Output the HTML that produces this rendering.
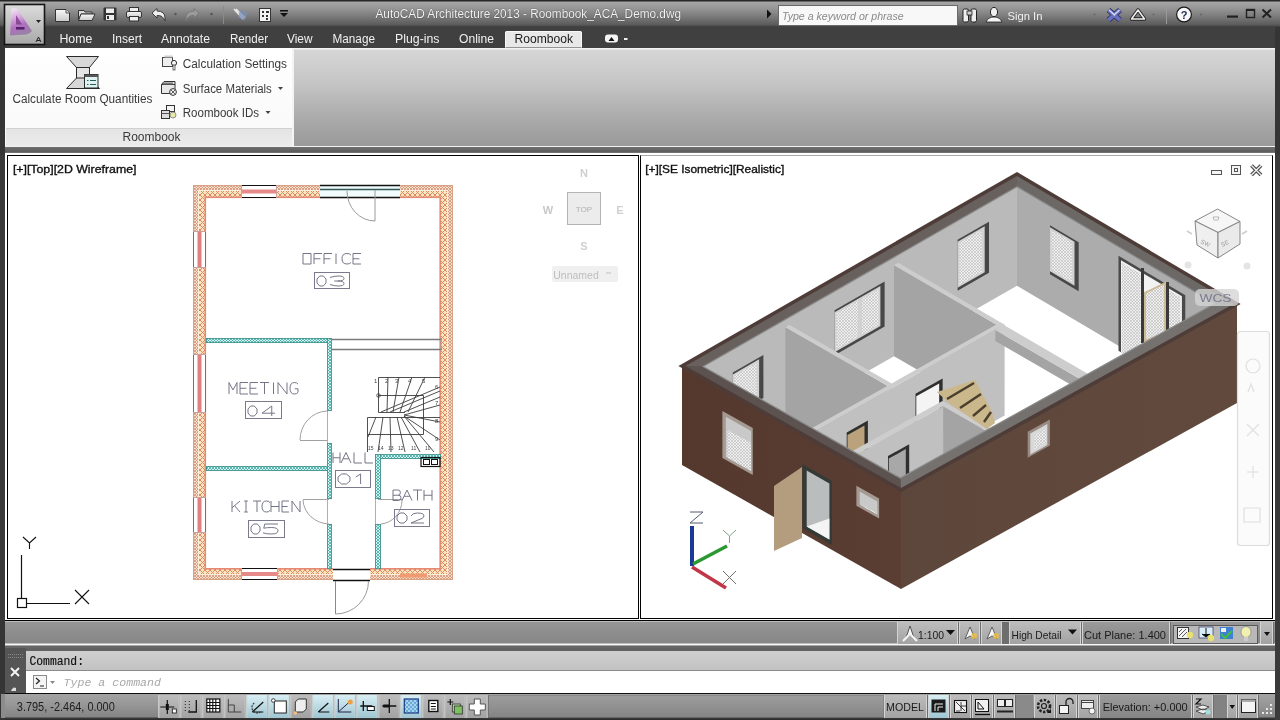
<!DOCTYPE html>
<html><head><meta charset="utf-8">
<style>
*{margin:0;padding:0;box-sizing:border-box}
html,body{width:1280px;height:720px;overflow:hidden;background:#3a3a3a;font-family:"Liberation Sans",sans-serif}
.a{position:absolute;will-change:transform}
.t{position:absolute;white-space:nowrap;line-height:1}
#title{left:0;top:0;width:1280px;height:27px;background:linear-gradient(#262626 0,#262626 1px,#a6a6a6 2px,#979797 8px,#7c7c7c 16px,#5e5e5e 24px,#4e4e4e 26px,#363636 27px)}
#tabs{left:0;top:27px;width:1280px;height:21px;background:#404040}
#ribbon{left:5px;top:48px;width:1270px;height:98px;background:linear-gradient(#f4f4f4 0,#f4f4f4 1px,#d6d6d6 2px,#c6c6c6 35%,#a8a8a8 75%,#9a9a9a)}
#panel{left:5px;top:48px;width:289px;height:98px;background:linear-gradient(#ffffff,#f8f8f8);border-right:2px solid #f4f4f4}
#panlab{left:6px;top:128px;width:286px;height:18px;background:linear-gradient(#e4e4e4,#ececec);border-top:1px solid #d0d0d0}
#band{left:0;top:146px;width:1280px;height:9px;background:linear-gradient(#f2f2f2 0,#f2f2f2 1px,#707070 1px,#5c5c5c 6px,#8a8a8a 7px,#d8d8d8 9px)}
#vparea{left:5px;top:153px;width:1270px;height:468px;background:#fff}
#vpl{left:7px;top:155px;width:632px;height:464px;border:1px solid #000;background:#fff}
#vpr{left:640px;top:155px;width:633px;height:464px;border:1px solid #000;border-top-color:#a8a8a8;background:#fff}
#dsb{left:0;top:620px;width:1280px;height:28px;background:linear-gradient(#000 0,#000 1px,#e8e8e8 1px,#969696 2px,#8e8e8e 12px,#868686 23px,#f6f6f6 24px,#f6f6f6 25px,#5e5e5e 26px,#6c6c6c 28px)}
#cmd{left:5px;top:648px;width:1270px;height:45px;background:linear-gradient(#626262 0,#626262 3px,#fff 3px)}
#cmdh{left:26px;top:651px;width:1249px;height:20px;background:linear-gradient(#d0d0d0,#c2c2c2);border-bottom:1px solid #8c8c8c}
#cmdgrip{left:5px;top:648px;width:21px;height:45px;background:linear-gradient(#666,#4a4a4a)}
#sb{left:0;top:693px;width:1280px;height:27px;background:linear-gradient(#0e0e0e 0,#0e0e0e 1px,#a4a4a4 1px,#969696 12px,#858585 24px,#3a3a3a 25px,#2a2a2a 27px)}
.tab{color:#f2f2f2;font-size:12px;top:33px;text-shadow:0 0 1px #000}
.rb{color:#333;font-size:12px}
.btn{position:absolute;top:695px;height:22px;background:linear-gradient(#b6b6b6,#9c9c9c);border-right:1px solid #6a6a6a;border-left:1px solid #c8c8c8}
.btnb{background:linear-gradient(#d0e8f0,#9cc4d4)}
.dbtn{position:absolute;top:622px;height:22px;background:linear-gradient(#b8b8b8,#a0a0a0);border-right:1px solid #707070;border-left:1px solid #cfcfcf}
</style></head><body>
<div class="a" id="title"></div>
<div class="a" id="tabs"></div>
<div class="a" id="ribbon"></div>
<div class="a" id="panel"></div>
<div class="a" id="panlab"></div>
<div class="a" id="band"></div>
<div class="a" id="vparea"></div>
<div class="a" id="vpl"></div>
<div class="a" id="vpr"></div>
<svg class="a" style="left:8px;top:156px" width="630" height="462" viewBox="8 156 630 462"><defs><pattern id="hx" width="5" height="5" patternUnits="userSpaceOnUse"><rect width="5" height="5" fill="#f9e6c0"/><path d="M0,0L5,5M5,0L0,5" stroke="#e08a62" stroke-width="1"/></pattern><pattern id="hf" width="3" height="3" patternUnits="userSpaceOnUse"><rect width="3" height="3" fill="#f4e0cc"/><path d="M0,0L3,3M3,0L0,3" stroke="#d69274" stroke-width="0.8"/></pattern><pattern id="ht" width="3" height="3" patternUnits="userSpaceOnUse"><rect width="3" height="3" fill="#d4f4f2"/><path d="M0,0L3,3M3,0L0,3" stroke="#3fa9a2" stroke-width="0.8"/></pattern></defs>
<rect x="193" y="185" width="260" height="13" fill="url(#hx)"/>
<rect x="193" y="568" width="260" height="12" fill="url(#hx)"/>
<rect x="193" y="185" width="13" height="395" fill="url(#hx)"/>
<rect x="440" y="185" width="13" height="395" fill="url(#hx)"/>
<rect x="193" y="185" width="260" height="5" fill="url(#hf)"/>
<rect x="193" y="575" width="260" height="5" fill="url(#hf)"/>
<rect x="193" y="185" width="5" height="395" fill="url(#hf)"/>
<rect x="448" y="185" width="5" height="395" fill="url(#hf)"/>
<rect x="198.5" y="190.5" width="249" height="384" fill="none" stroke="#fbeede" stroke-width="1"/>
<rect x="204.5" y="196.5" width="236" height="1.6" fill="#e48a74"/>
<rect x="204.5" y="196.5" width="1.6" height="373" fill="#e48a74"/>
<rect x="439.4" y="196.5" width="1.6" height="373" fill="#e48a74"/>
<rect x="204.5" y="568" width="236" height="1.6" fill="#e48a74"/>
<rect x="193.5" y="185.5" width="259" height="394" fill="none" stroke="#d9a184" stroke-width="1"/>
<rect x="241" y="185" width="36" height="13" fill="#fff"/>
<line x1="241" y1="185.5" x2="277" y2="185.5" stroke="#111" stroke-width="1.2"/>
<line x1="241" y1="197.5" x2="277" y2="197.5" stroke="#111" stroke-width="1.2"/>
<rect x="241" y="189.5" width="36" height="4" fill="#e58a88"/>
<line x1="241.5" y1="185" x2="241.5" y2="198" stroke="#c8a0a0" stroke-width="1"/>
<line x1="276.5" y1="185" x2="276.5" y2="198" stroke="#c8a0a0" stroke-width="1"/>
<rect x="241" y="568" width="37" height="12" fill="#fff"/>
<line x1="241" y1="568.5" x2="278" y2="568.5" stroke="#111" stroke-width="1.2"/>
<line x1="241" y1="579.5" x2="278" y2="579.5" stroke="#111" stroke-width="1.2"/>
<rect x="241" y="572" width="37" height="4" fill="#e58a88"/>
<line x1="241.5" y1="568" x2="241.5" y2="580" stroke="#c8a0a0" stroke-width="1"/>
<line x1="277.5" y1="568" x2="277.5" y2="580" stroke="#c8a0a0" stroke-width="1"/>
<rect x="193" y="231" width="13" height="37" fill="#fff"/>
<line x1="193.5" y1="231" x2="193.5" y2="268" stroke="#5a7a90" stroke-width="1"/>
<line x1="205.5" y1="231" x2="205.5" y2="268" stroke="#5a7a90" stroke-width="1"/>
<rect x="197.5" y="231" width="4" height="37" fill="#e08080"/>
<line x1="193" y1="231.5" x2="206" y2="231.5" stroke="#c8a0a0" stroke-width="1"/>
<line x1="193" y1="267.5" x2="206" y2="267.5" stroke="#c8a0a0" stroke-width="1"/>
<rect x="193" y="354" width="13" height="59" fill="#fff"/>
<line x1="193.5" y1="354" x2="193.5" y2="413" stroke="#5a7a90" stroke-width="1"/>
<line x1="205.5" y1="354" x2="205.5" y2="413" stroke="#5a7a90" stroke-width="1"/>
<rect x="197.5" y="354" width="4" height="59" fill="#e08080"/>
<line x1="193" y1="354.5" x2="206" y2="354.5" stroke="#c8a0a0" stroke-width="1"/>
<line x1="193" y1="412.5" x2="206" y2="412.5" stroke="#c8a0a0" stroke-width="1"/>
<rect x="193" y="497" width="13" height="36" fill="#fff"/>
<line x1="193.5" y1="497" x2="193.5" y2="533" stroke="#5a7a90" stroke-width="1"/>
<line x1="205.5" y1="497" x2="205.5" y2="533" stroke="#5a7a90" stroke-width="1"/>
<rect x="197.5" y="497" width="4" height="36" fill="#e08080"/>
<line x1="193" y1="497.5" x2="206" y2="497.5" stroke="#c8a0a0" stroke-width="1"/>
<line x1="193" y1="532.5" x2="206" y2="532.5" stroke="#c8a0a0" stroke-width="1"/>
<rect x="320" y="185" width="80" height="13" fill="#f2fbfb"/>
<line x1="320" y1="185.5" x2="400" y2="185.5" stroke="#111" stroke-width="1.3"/>
<line x1="320" y1="197.5" x2="400" y2="197.5" stroke="#111" stroke-width="1.3"/>
<line x1="320" y1="189.5" x2="400" y2="189.5" stroke="#2e5a58" stroke-width="1.6"/>
<line x1="375" y1="190" x2="375" y2="221" stroke="#9a9a9a" stroke-width="1"/>
<path d="M347,191 A28,30 0 0 0 375,221" fill="none" stroke="#9a9a9a" stroke-width="1"/>
<rect x="333" y="568" width="37" height="13" fill="#fff"/>
<line x1="333" y1="569.5" x2="370" y2="569.5" stroke="#111" stroke-width="1.4"/>
<line x1="333" y1="580.5" x2="370" y2="580.5" stroke="#111" stroke-width="1.4"/>
<line x1="335.5" y1="581" x2="335.5" y2="614" stroke="#8a8a8a" stroke-width="1"/>
<path d="M335.5,614 A33,33 0 0 0 368.5,581" fill="none" stroke="#9a9a9a" stroke-width="1"/>
<rect x="400" y="573.5" width="27" height="4" fill="#ef9a70"/>
<rect x="206" y="338" width="126" height="5" fill="url(#ht)"/>
<rect x="206.4" y="338.4" width="125.2" height="4.2" fill="none" stroke="#3f8f8a" stroke-width="0.8"/>
<rect x="206" y="466" width="124" height="5" fill="url(#ht)"/>
<rect x="206.4" y="466.4" width="123.2" height="4.2" fill="none" stroke="#3f8f8a" stroke-width="0.8"/>
<rect x="327" y="338" width="5" height="73" fill="url(#ht)"/>
<rect x="327.4" y="338.4" width="4.2" height="72.2" fill="none" stroke="#3f8f8a" stroke-width="0.8"/>
<rect x="327" y="443" width="5" height="56" fill="url(#ht)"/>
<rect x="327.4" y="443.4" width="4.2" height="55.2" fill="none" stroke="#3f8f8a" stroke-width="0.8"/>
<rect x="327" y="524" width="5" height="45" fill="url(#ht)"/>
<rect x="327.4" y="524.4" width="4.2" height="44.2" fill="none" stroke="#3f8f8a" stroke-width="0.8"/>
<rect x="375" y="454" width="66" height="5" fill="url(#ht)"/>
<rect x="375.4" y="454.4" width="65.2" height="4.2" fill="none" stroke="#3f8f8a" stroke-width="0.8"/>
<rect x="375" y="454" width="6" height="45" fill="url(#ht)"/>
<rect x="375.4" y="454.4" width="5.2" height="44.2" fill="none" stroke="#3f8f8a" stroke-width="0.8"/>
<rect x="375" y="524" width="6" height="45" fill="url(#ht)"/>
<rect x="375.4" y="524.4" width="5.2" height="44.2" fill="none" stroke="#3f8f8a" stroke-width="0.8"/>
<line x1="332" y1="339.5" x2="442" y2="339.5" stroke="#7a7a7a" stroke-width="1.6"/>
<line x1="332" y1="349.5" x2="442" y2="349.5" stroke="#7a7a7a" stroke-width="1.6"/>
<line x1="441" y1="339" x2="441" y2="350" stroke="#9a9a9a" stroke-width="1"/>
<line x1="300" y1="440.5" x2="328" y2="440.5" stroke="#a0a0a0" stroke-width="1"/>
<path d="M300,440 A28,29 0 0 1 327,411" fill="none" stroke="#a0a0a0" stroke-width="1"/>
<line x1="303" y1="499.5" x2="329" y2="499.5" stroke="#a0a0a0" stroke-width="1"/>
<path d="M303,500 A27,25 0 0 0 329,524" fill="none" stroke="#a0a0a0" stroke-width="1"/>
<line x1="378" y1="499.5" x2="402" y2="499.5" stroke="#a0a0a0" stroke-width="1"/>
<path d="M402,500 A23,24 0 0 1 381,524" fill="none" stroke="#a0a0a0" stroke-width="1"/>
<line x1="327.5" y1="411" x2="327.5" y2="443" stroke="#b0b0b0" stroke-width="1"/>
<line x1="327.5" y1="499" x2="327.5" y2="524" stroke="#b0b0b0" stroke-width="1"/>
<line x1="375.5" y1="499" x2="375.5" y2="524" stroke="#b0b0b0" stroke-width="1"/>
<path d="M440,377.5 L378.5,377.5 L378.5,412.5 L405,412.5 M440,417.5 L367.5,417.5 L367.5,452 M378.5,395.5 L423.5,395.5 L423.5,434.5 L367.5,434.5" fill="none" stroke="#3c3c3c" stroke-width="0.9"/>
<path d="M388,377 L387,412 M399,377 L393,412 M412,377 L400,412 M425,377 L408,412 M381,412 L440,387 M390,412 L440,391 M404,412 L440,397 M404,415 L440,405 M404,415 L440,422 M404,416 L440,440 M376,417 L368,437 M383,417 L378,452 M390,417 L391,452 M397,417 L405,452 M401,417 L420,452 M404,416 L434,452" fill="none" stroke="#3c3c3c" stroke-width="0.9"/>
<circle cx="378.5" cy="395.5" r="1.8" fill="none" stroke="#3c3c3c" stroke-width="0.8"/>
<text x="374" y="383" font-size="6" fill="#444" font-family="Liberation Sans">1</text>
<text x="385" y="383" font-size="6" fill="#444" font-family="Liberation Sans">2</text>
<text x="395" y="383" font-size="6" fill="#444" font-family="Liberation Sans">3</text>
<text x="408" y="383" font-size="6" fill="#444" font-family="Liberation Sans">4</text>
<text x="422" y="383" font-size="6" fill="#444" font-family="Liberation Sans">5</text>
<text x="435" y="389" font-size="6" fill="#444" font-family="Liberation Sans">6</text>
<text x="435" y="405" font-size="6" fill="#444" font-family="Liberation Sans">7</text>
<text x="435" y="423" font-size="6" fill="#444" font-family="Liberation Sans">8</text>
<text x="435" y="441" font-size="6" fill="#444" font-family="Liberation Sans">9</text>
<text x="368" y="450" font-size="5" fill="#444" font-family="Liberation Sans">15</text>
<text x="378" y="450" font-size="5" fill="#444" font-family="Liberation Sans">14</text>
<text x="388" y="450" font-size="5" fill="#444" font-family="Liberation Sans">13</text>
<text x="398" y="450" font-size="5" fill="#444" font-family="Liberation Sans">12</text>
<text x="411" y="450" font-size="5" fill="#444" font-family="Liberation Sans">11</text>
<text x="425" y="450" font-size="5" fill="#444" font-family="Liberation Sans">10</text>
<rect x="421" y="457.5" width="19" height="9" fill="none" stroke="#111" stroke-width="1.2"/>
<rect x="423.5" y="459.5" width="6" height="5" fill="none" stroke="#111" stroke-width="1"/>
<rect x="431.5" y="459.5" width="6" height="5" fill="none" stroke="#111" stroke-width="1"/>
<path d="M303.00,253.50 L311.00,253.50 L311.00,264.00 L303.00,264.00 Z" fill="none" stroke="#6e6e82" stroke-width="0.95" stroke-linejoin="round"/><path d="M322.00,253.50 L314.00,253.50 L314.00,264.00 M314.00,258.75 L320.40,258.75" fill="none" stroke="#6e6e82" stroke-width="0.95" stroke-linejoin="round"/><path d="M332.00,253.50 L324.00,253.50 L324.00,264.00 M324.00,258.75 L330.40,258.75" fill="none" stroke="#6e6e82" stroke-width="0.95" stroke-linejoin="round"/><path d="M336.00,253.50 L336.00,264.00" fill="none" stroke="#6e6e82" stroke-width="0.95" stroke-linejoin="round"/><path d="M351.00,255.07 Q350.10,253.50 346.95,253.50 Q342.00,253.50 342.00,258.75 Q342.00,264.00 346.95,264.00 Q350.10,264.00 351.00,262.43" fill="none" stroke="#6e6e82" stroke-width="0.95" stroke-linejoin="round"/><path d="M361.00,253.50 L353.00,253.50 L353.00,264.00 L361.00,264.00 M353.00,258.75 L359.40,258.75" fill="none" stroke="#6e6e82" stroke-width="0.95" stroke-linejoin="round"/>
<rect x="314.5" y="272.5" width="35" height="16" fill="none" stroke="#7a7a8c" stroke-width="1"/>
<path d="M319.70,276.00 L323.30,276.00 L326.00,279.00 L326.00,283.00 L323.30,286.00 L319.70,286.00 L317.00,283.00 L317.00,279.00 Z" fill="none" stroke="#6e6e82" stroke-width="0.95" stroke-linejoin="round"/><path d="M330.00,277.50 Q334.20,276.00 338.40,276.00 Q344.00,276.00 344.00,278.50 Q344.00,281.00 337.70,281.00 Q344.00,281.00 344.00,283.50 Q344.00,286.00 338.40,286.00 Q334.20,286.00 330.00,284.50 M334.20,281.00 L337.70,281.00" fill="none" stroke="#6e6e82" stroke-width="0.95" stroke-linejoin="round"/>
<path d="M229.00,394.00 L229.00,382.50 L233.00,389.98 L237.00,382.50 L237.00,394.00" fill="none" stroke="#6e6e82" stroke-width="0.95" stroke-linejoin="round"/><path d="M248.00,382.50 L240.00,382.50 L240.00,394.00 L248.00,394.00 M240.00,388.25 L246.40,388.25" fill="none" stroke="#6e6e82" stroke-width="0.95" stroke-linejoin="round"/><path d="M258.00,382.50 L250.00,382.50 L250.00,394.00 L258.00,394.00 M250.00,388.25 L256.40,388.25" fill="none" stroke="#6e6e82" stroke-width="0.95" stroke-linejoin="round"/><path d="M260.00,382.50 L269.00,382.50 M264.50,382.50 L264.50,394.00" fill="none" stroke="#6e6e82" stroke-width="0.95" stroke-linejoin="round"/><path d="M273.50,382.50 L273.50,394.00" fill="none" stroke="#6e6e82" stroke-width="0.95" stroke-linejoin="round"/><path d="M278.00,394.00 L278.00,382.50 L287.00,394.00 L287.00,382.50" fill="none" stroke="#6e6e82" stroke-width="0.95" stroke-linejoin="round"/><path d="M298.00,384.23 Q297.20,382.50 294.40,382.50 Q290.00,382.50 290.00,388.25 Q290.00,394.00 294.40,394.00 Q297.20,394.00 298.00,392.27 L298.00,388.82 L294.80,388.82" fill="none" stroke="#6e6e82" stroke-width="0.95" stroke-linejoin="round"/>
<rect x="245.5" y="401.5" width="36" height="17" fill="none" stroke="#7a7a8c" stroke-width="1"/>
<path d="M250.70,406.00 L254.30,406.00 L257.00,409.00 L257.00,413.00 L254.30,416.00 L250.70,416.00 L248.00,413.00 L248.00,409.00 Z" fill="none" stroke="#6e6e82" stroke-width="0.95" stroke-linejoin="round"/><path d="M271.75,416.00 L271.75,406.00 L262.00,413.20 L275.00,413.20" fill="none" stroke="#6e6e82" stroke-width="0.95" stroke-linejoin="round"/>
<path d="M333.00,452.50 L333.00,463.00 M340.00,452.50 L340.00,463.00 M333.00,457.75 L340.00,457.75" fill="none" stroke="#6e6e82" stroke-width="0.95" stroke-linejoin="round"/><path d="M341.00,463.00 L346.00,452.50 L351.00,463.00 M343.20,458.80 L348.80,458.80" fill="none" stroke="#6e6e82" stroke-width="0.95" stroke-linejoin="round"/><path d="M354.00,452.50 L354.00,463.00 L362.00,463.00" fill="none" stroke="#6e6e82" stroke-width="0.95" stroke-linejoin="round"/><path d="M365.00,452.50 L365.00,463.00 L373.00,463.00" fill="none" stroke="#6e6e82" stroke-width="0.95" stroke-linejoin="round"/>
<rect x="335.5" y="470.5" width="35" height="17" fill="none" stroke="#7a7a8c" stroke-width="1"/>
<path d="M341.60,474.00 L346.40,474.00 L350.00,477.00 L350.00,481.00 L346.40,484.00 L341.60,484.00 L338.00,481.00 L338.00,477.00 Z" fill="none" stroke="#6e6e82" stroke-width="0.95" stroke-linejoin="round"/><path d="M355.80,477.00 L360.60,474.00 L360.60,484.00" fill="none" stroke="#6e6e82" stroke-width="0.95" stroke-linejoin="round"/>
<path d="M232.00,501.00 L232.00,512.00 M240.00,501.00 L232.00,507.82 M234.56,505.62 L240.00,512.00" fill="none" stroke="#6e6e82" stroke-width="0.95" stroke-linejoin="round"/><path d="M246.00,501.00 L246.00,512.00 M244.20,501.00 L247.80,501.00 M244.20,512.00 L247.80,512.00" fill="none" stroke="#6e6e82" stroke-width="0.95" stroke-linejoin="round"/><path d="M253.00,501.00 L261.00,501.00 M257.00,501.00 L257.00,512.00" fill="none" stroke="#6e6e82" stroke-width="0.95" stroke-linejoin="round"/><path d="M270.00,502.65 Q269.20,501.00 266.40,501.00 Q262.00,501.00 262.00,506.50 Q262.00,512.00 266.40,512.00 Q269.20,512.00 270.00,510.35" fill="none" stroke="#6e6e82" stroke-width="0.95" stroke-linejoin="round"/><path d="M271.00,501.00 L271.00,512.00 M279.00,501.00 L279.00,512.00 M271.00,506.50 L279.00,506.50" fill="none" stroke="#6e6e82" stroke-width="0.95" stroke-linejoin="round"/><path d="M289.00,501.00 L282.00,501.00 L282.00,512.00 L289.00,512.00 M282.00,506.50 L287.60,506.50" fill="none" stroke="#6e6e82" stroke-width="0.95" stroke-linejoin="round"/><path d="M292.00,512.00 L292.00,501.00 L300.00,512.00 L300.00,501.00" fill="none" stroke="#6e6e82" stroke-width="0.95" stroke-linejoin="round"/>
<rect x="248.5" y="520.5" width="36" height="17" fill="none" stroke="#7a7a8c" stroke-width="1"/>
<path d="M253.70,524.00 L257.30,524.00 L260.00,527.00 L260.00,531.00 L257.30,534.00 L253.70,534.00 L251.00,531.00 L251.00,527.00 Z" fill="none" stroke="#6e6e82" stroke-width="0.95" stroke-linejoin="round"/><path d="M278.00,524.00 L264.80,524.00 L263.75,528.20 Q267.50,527.50 271.25,527.50 Q278.00,527.50 278.00,530.80 Q278.00,534.00 271.25,534.00 Q266.00,534.00 263.00,532.80" fill="none" stroke="#6e6e82" stroke-width="0.95" stroke-linejoin="round"/>
<path d="M393.00,490.00 L393.00,500.50 L398.60,500.50 Q401.00,500.50 401.00,497.88 Q401.00,495.25 398.60,495.25 L393.00,495.25 M393.00,490.00 L398.20,490.00 Q400.36,490.00 400.36,492.62 Q400.36,495.25 398.20,495.25" fill="none" stroke="#6e6e82" stroke-width="0.95" stroke-linejoin="round"/><path d="M402.00,500.50 L407.00,490.00 L412.00,500.50 M404.20,496.30 L409.80,496.30" fill="none" stroke="#6e6e82" stroke-width="0.95" stroke-linejoin="round"/><path d="M413.00,490.00 L422.00,490.00 M417.50,490.00 L417.50,500.50" fill="none" stroke="#6e6e82" stroke-width="0.95" stroke-linejoin="round"/><path d="M424.00,490.00 L424.00,500.50 M432.00,490.00 L432.00,500.50 M424.00,495.25 L432.00,495.25" fill="none" stroke="#6e6e82" stroke-width="0.95" stroke-linejoin="round"/>
<rect x="394.5" y="509.5" width="35" height="17" fill="none" stroke="#7a7a8c" stroke-width="1"/>
<path d="M400.00,513.00 L404.00,513.00 L407.00,516.00 L407.00,520.00 L404.00,523.00 L400.00,523.00 L397.00,520.00 L397.00,516.00 Z" fill="none" stroke="#6e6e82" stroke-width="0.95" stroke-linejoin="round"/><path d="M411.00,516.00 Q412.30,513.00 417.50,513.00 Q424.00,513.00 424.00,516.00 Q424.00,518.50 418.15,520.00 L411.00,523.00 L424.00,523.00" fill="none" stroke="#6e6e82" stroke-width="0.95" stroke-linejoin="round"/>
<line x1="21.5" y1="555" x2="21.5" y2="603" stroke="#111" stroke-width="1.2"/>
<line x1="21" y1="603.5" x2="70" y2="603.5" stroke="#111" stroke-width="1.2"/>
<rect x="17.5" y="598.5" width="9" height="9" fill="#fff" stroke="#111" stroke-width="1.2"/>
<path d="M23,537 L29.5,543 L36,537 M29.5,543 L29.5,549" fill="none" stroke="#111" stroke-width="1.1"/>
<path d="M75,590 L89,604 M89,590 L75,604" fill="none" stroke="#111" stroke-width="1.1"/>
<rect x="567.5" y="192.5" width="33" height="32" fill="#ececec" stroke="#b4b4b4" stroke-width="1"/>
<text x="584" y="212" font-size="8" fill="#b0b0b0" font-family="Liberation Sans" text-anchor="middle">TOP</text>
<text x="584" y="177" font-size="11" font-weight="bold" fill="#d0d0d0" font-family="Liberation Sans" text-anchor="middle">N</text>
<text x="548" y="214" font-size="11" font-weight="bold" fill="#c8c8c8" font-family="Liberation Sans" text-anchor="middle">W</text>
<text x="620" y="214" font-size="11" font-weight="bold" fill="#d0d0d0" font-family="Liberation Sans" text-anchor="middle">E</text>
<text x="584" y="250" font-size="11" font-weight="bold" fill="#d0d0d0" font-family="Liberation Sans" text-anchor="middle">S</text>
<rect x="552" y="266" width="66" height="16" rx="2" fill="#f0f0f0"/>
<text x="576" y="278.5" font-size="10.5" fill="#bdbdbd" font-family="Liberation Sans" text-anchor="middle">Unnamed</text>
<path d="M606,273 h5" stroke="#d0d0d0" stroke-width="1.5"/>
</svg>
<svg class="a" style="left:641px;top:156px" width="631" height="462" viewBox="641 156 631 462"><defs><pattern id="mesh" width="3" height="3" patternUnits="userSpaceOnUse"><rect width="3" height="3" fill="#efefef"/><path d="M0,0L3,3M3,0L0,3" stroke="#b0b0b0" stroke-width="0.5"/></pattern><linearGradient id="brs" x1="0" y1="0" x2="1" y2="0"><stop offset="0" stop-color="#54382d"/><stop offset="1" stop-color="#5a3e33"/></linearGradient><linearGradient id="bre" x1="0" y1="0" x2="1" y2="0"><stop offset="0" stop-color="#5d463b"/><stop offset="1" stop-color="#62493d"/></linearGradient></defs>
<polygon points="1006.0,180.3 1225.9,310.1 1225.9,409.1 1006.0,279.3" fill="#acacac"/>
<polygon points="1050.0,225.3 1078.7,242.3 1078.7,291.3 1050.0,274.3" fill="#474747"/>
<polygon points="1050.0,227.3 1074.5,241.8 1074.5,285.8 1050.0,271.3" fill="#d2d2d2"/>
<polygon points="1051.7,230.3 1072.0,242.3 1072.0,282.3 1051.7,270.3" fill="url(#mesh)"/>
<polygon points="1118.5,255.7 1185.3,295.2 1185.3,390.2 1118.5,350.7" fill="#4a4a4a"/>
<polygon points="1121.0,260.2 1181.9,296.2 1181.9,388.2 1121.0,352.2" fill="#f2f2f2"/>
<polygon points="1121.9,262.7 1140.5,273.7 1140.5,363.7 1121.9,352.7" fill="url(#mesh)"/>
<polygon points="1166.7,289.2 1180.3,297.2 1180.3,387.2 1166.7,379.2" fill="url(#mesh)"/>
<path d="M1142.5,268 V343 M1167.5,282 V333" stroke="#3a3a3a" stroke-width="3"/>
<polygon points="1145.0,293.0 1165.0,283.0 1165.0,333.0 1145.0,341.0" fill="url(#mesh)" stroke="#cdbb98" stroke-width="2"/>
<polygon points="1017.0,174.0 1237.0,304.0 1225.9,310.1 1006.0,180.3" fill="#5e5654"/>
<polygon points="703.1,366.4 1017.0,186.8 1017.0,285.8 703.1,465.4" fill="#bababa"/>
<polygon points="957.6,239.8 989.0,221.8 989.0,272.8 957.6,290.8" fill="#474747"/>
<polygon points="957.6,241.8 984.7,226.3 984.7,272.3 957.6,287.8" fill="#d2d2d2"/>
<polygon points="959.3,242.8 982.2,229.7 982.2,271.7 959.3,284.8" fill="url(#mesh)"/>
<polygon points="834.6,310.2 884.6,281.5 884.6,326.5 834.6,355.2" fill="#474747"/>
<polygon points="834.6,312.2 880.4,285.9 880.4,325.9 834.6,352.2" fill="#d2d2d2"/>
<polygon points="836.3,313.2 857.9,300.8 857.9,336.8 836.3,349.2" fill="url(#mesh)"/>
<polygon points="862.2,298.4 878.7,288.9 878.7,324.9 862.2,334.4" fill="url(#mesh)"/>
<polygon points="732.8,372.4 763.4,354.9 763.4,397.9 732.8,415.4" fill="#474747"/>
<polygon points="732.8,374.4 759.1,359.3 759.1,397.3 732.8,412.4" fill="#d2d2d2"/>
<polygon points="734.5,375.4 756.6,362.8 756.6,396.8 734.5,409.4" fill="url(#mesh)"/>
<polygon points="1006.0,180.3 1017.0,186.8 703.1,366.4 692.2,360.2" fill="#5e5654"/>
<polygon points="894.0,265.2 996.2,324.6 996.2,415.6 894.0,356.2" fill="#a4a4a4"/>
<polygon points="996.2,324.6 1000.4,322.2 1000.4,413.2 996.2,415.6" fill="#c0c0c0"/>
<polygon points="898.2,262.8 1000.4,322.2 996.2,324.6 894.0,265.2" fill="#cdcdcd"/>
<polygon points="785.4,327.3 887.5,385.8 887.5,476.8 785.4,418.3" fill="#a4a4a4"/>
<polygon points="887.5,385.8 891.7,383.4 891.7,474.4 887.5,476.8" fill="#c0c0c0"/>
<polygon points="789.6,324.9 891.7,383.4 887.5,385.8 785.4,327.3" fill="#cdcdcd"/>
<polygon points="804.2,432.6 808.4,435.0 808.4,526.0 804.2,523.6" fill="#a4a4a4"/>
<polygon points="808.4,435.0 1004.6,324.6 1004.6,415.6 808.4,526.0" fill="#c0c0c0"/>
<polygon points="915.5,393.8 942.6,378.5 942.6,450.5 915.5,465.8" fill="#2f2f2f"/>
<polygon points="916.3,396.3 939.2,383.4 939.2,452.4 916.3,465.3" fill="#f4f4f4"/>
<polygon points="846.7,432.5 867.9,420.6 867.9,492.6 846.7,504.5" fill="#2f2f2f"/>
<polygon points="847.5,435.0 864.5,425.5 864.5,494.5 847.5,504.0" fill="#b9a27c"/>
<polygon points="1000.4,322.2 1004.6,324.6 808.4,435.0 804.2,432.6" fill="#cdcdcd"/>
<polygon points="995.3,329.9 1086.5,382.8 1086.5,393.8 995.3,340.9" fill="#a4a4a4"/>
<polygon points="1086.5,382.8 1095.0,378.1 1095.0,389.1 1086.5,393.8" fill="#c0c0c0"/>
<polygon points="1003.8,325.1 1095.0,378.1 1086.5,382.8 995.3,329.9" fill="#cdcdcd"/>
<polygon points="845.5,455.1 850.6,458.0 850.6,549.0 845.5,546.1" fill="#a4a4a4"/>
<polygon points="850.6,458.0 947.4,403.8 947.4,494.8 850.6,549.0" fill="#c0c0c0"/>
<polygon points="888.0,456.1 909.2,444.2 909.2,516.2 888.0,528.1" fill="#2f2f2f"/>
<polygon points="888.8,458.6 905.8,449.1 905.8,518.1 888.8,527.6" fill="#a8a8a8"/>
<polygon points="942.4,400.9 947.4,403.8 850.6,458.0 845.5,455.1" fill="#cdcdcd"/>
<polygon points="943.2,406.2 993.0,434.7 993.0,525.7 943.2,497.2" fill="#a4a4a4"/>
<polygon points="993.0,434.7 997.2,432.4 997.2,523.4 993.0,525.7" fill="#c0c0c0"/>
<polygon points="947.4,403.8 997.2,432.4 993.0,434.7 943.2,406.2" fill="#cdcdcd"/>
<polygon points="937.0,392.0 975.0,380.0 992.0,412.0 995.0,423.0 987.0,429.0 950.0,404.0" fill="#cbb78c"/>
<line x1="947" y1="399" x2="974" y2="383" stroke="#4a3f2c" stroke-width="2.4"/>
<line x1="960" y1="408" x2="981" y2="394" stroke="#4a3f2c" stroke-width="2.4"/>
<line x1="973" y1="416" x2="986" y2="405" stroke="#4a3f2c" stroke-width="2.4"/>
<line x1="984" y1="422" x2="991" y2="412" stroke="#4a3f2c" stroke-width="2.4"/>
<polygon points="1214.9,303.6 1225.9,310.1 911.2,484.3 900.3,478.1" fill="#5e5654"/>
<polygon points="692.2,360.2 911.2,484.3 901.0,490.0 682.0,366.0" fill="#5e5654"/>
<polygon points="682.0,366.0 901.0,490.0 901.0,589.0 682.0,465.0" fill="url(#brs)"/>
<polygon points="901.0,490.0 1237.0,304.0 1237.0,403.0 901.0,589.0" fill="url(#bre)"/>
<polygon points="722.4,410.9 752.8,428.1 752.8,475.1 722.4,457.9" fill="#a49a92"/>
<polygon points="725.8,416.8 751.1,431.1 751.1,471.1 725.8,456.8" fill="#c9c9c9"/>
<polygon points="727.5,429.8 751.1,443.1 751.1,471.1 727.5,457.8" fill="url(#mesh)"/>
<polygon points="856.4,485.7 879.1,498.6 879.1,518.6 856.4,505.7" fill="#a49a92"/>
<polygon points="859.7,491.6 877.4,501.6 877.4,514.6 859.7,504.6" fill="#c9c9c9"/>
<polygon points="861.4,504.6 877.4,513.6 877.4,514.6 861.4,505.6" fill="url(#mesh)"/>
<polygon points="802.5,464.2 831.9,480.9 831.9,544.9 802.5,528.2" fill="#343a36"/>
<polygon points="806.7,470.6 829.4,483.5 829.4,539.5 806.7,526.6" fill="#b9bdbd"/>
<polygon points="806.7,526.6 829.4,539.5 829.4,518.5" fill="#f4f4f4"/>
<polygon points="774.0,486.0 802.0,467.0 802.0,538.0 774.0,551.0" fill="#b49d7f"/>
<polygon points="1027.7,431.8 1049.9,419.6 1049.9,445.6 1027.7,457.8" fill="#9a8c84"/>
<polygon points="1030.3,433.4 1047.3,424.0 1047.3,445.0 1030.3,454.4" fill="#d8d8d8"/>
<polygon points="1033.7,435.5 1045.6,428.9 1045.6,442.9 1033.7,449.5" fill="url(#mesh)"/>
<polygon points="682.0,366.0 1017.0,174.0 1017.0,186.8 703.1,366.4" fill="#67605d"/>
<polygon points="1017.0,174.0 1237.0,304.0 1214.9,303.6 1017.0,186.8" fill="#6c6866"/>
<polygon points="1237.0,304.0 901.0,490.0 900.3,478.1 1214.9,303.6" fill="#74716e"/>
<polygon points="901.0,490.0 682.0,366.0 703.1,366.4 900.3,478.1" fill="#5c5350"/>
<polygon points="682.0,366.0 1017.0,174.0 1237.0,304.0 901.0,490.0" fill="none" stroke="#4e3c38" stroke-width="3.6"/>
<polygon points="703.1,366.4 1017.0,186.8 1214.9,303.6 900.3,478.1" fill="none" stroke="#8c8c8c" stroke-width="1.2"/>
</svg>
<svg class="a" style="left:0;top:0" width="1280" height="155" viewBox="0 0 1280 155">
<defs><linearGradient id="logo" x1="0" y1="0" x2="0" y2="1"><stop offset="0" stop-color="#dcdcdc"/><stop offset="1" stop-color="#a8a8a8"/></linearGradient><linearGradient id="purp" x1="0" y1="0" x2="1" y2="1"><stop offset="0" stop-color="#f0c0f0"/><stop offset="0.5" stop-color="#a040b0"/><stop offset="1" stop-color="#602070"/></linearGradient><linearGradient id="pg" x1="0" y1="0" x2="0" y2="1"><stop offset="0" stop-color="#fafafa"/><stop offset="1" stop-color="#c8c8c8"/></linearGradient></defs>
<rect x="0" y="27" width="5" height="128" fill="#353535"/>
<rect x="1275" y="27" width="5" height="128" fill="#353535"/>
<rect x="4.5" y="4.5" width="40" height="40" fill="url(#logo)" stroke="#151515" stroke-width="1.6"/>
<linearGradient id="purp2" x1="0" y1="0" x2="0.3" y2="1"><stop offset="0" stop-color="#f4ecf4"/><stop offset="0.35" stop-color="#dcb0e0"/><stop offset="0.7" stop-color="#b070c0"/><stop offset="1" stop-color="#9a80a8"/></linearGradient>
<path d="M11.5,8.5 L17,8.5 L32,31 Q30,34 26,34.5 L10,35.5 Z" fill="url(#purp2)"/>
<path d="M16,15 L22,24.5 L16,24.5 Z" fill="#7a3a8a" opacity="0.8"/>
<rect x="16" y="27" width="8.5" height="2.6" fill="#5a2070"/>
<path d="M36,20 L41,20 L38.5,23 Z" fill="#222"/>
<path d="M36,42 L38.5,37 L41,42 M37,40.5 L40,40.5" fill="none" stroke="#222" stroke-width="1"/>
<path d="M55.5,9.5 L66,9.5 L69.5,13 L69.5,21.5 L55.5,21.5 Z" fill="url(#pg)" stroke="#333" stroke-width="1"/>
<path d="M66,9.5 L66,13 L69.5,13" fill="#ddd" stroke="#333" stroke-width="0.8"/>
<path d="M78.5,10.5 L84,10.5 L85,12 L92,12 L92,14 L81,14 L78.5,20.5 Z" fill="#ddd" stroke="#333" stroke-width="1"/>
<path d="M81,14 L95,14 L92,20.5 L78.5,20.5 Z" fill="url(#pg)" stroke="#333" stroke-width="1"/>
<rect x="103.5" y="7.5" width="13" height="13" rx="1" fill="#333"/><rect x="106" y="8.5" width="8" height="4.5" fill="#eee"/><rect x="106" y="15" width="8" height="5" fill="#eee"/><rect x="107" y="16" width="2" height="3" fill="#333"/>
<rect x="129.5" y="7.5" width="9" height="4" fill="#eee" stroke="#333"/><rect x="126.5" y="11.5" width="15" height="6" rx="1.5" fill="url(#pg)" stroke="#333"/><rect x="129.5" y="16.5" width="9" height="4.5" fill="#eee" stroke="#333"/>
<path d="M152,13 L157,8.5 L157,11 Q165,11 165,18 L165,21 Q163,15 157,15.5 L157,18 Z" fill="#eee" stroke="#333" stroke-width="0.9"/>
<circle cx="175.5" cy="14" r="1.2" fill="#555"/>
<path d="M199,13 L194,8.5 L194,11 Q186,11 186,18 L186,21 Q188,15 194,15.5 L194,18 Z" fill="#9a9a9a" stroke="#777" stroke-width="0.9"/>
<circle cx="211.5" cy="14" r="1.2" fill="#555"/>
<line x1="223.5" y1="6" x2="223.5" y2="24" stroke="#8a8a8a" stroke-width="1"/>
<path d="M234,9 L243,19 M236,9 L245,18" stroke="#e8e8e8" stroke-width="1.6"/><path d="M240,10 L248,13 L244,21 L238,17 Z" fill="#7a90b8" opacity="0.7"/>
<rect x="259.5" y="8.5" width="11" height="13" fill="#f4f4f4" stroke="#333"/><rect x="262" y="11" width="2" height="2" fill="#333"/><rect x="262" y="15" width="2" height="2" fill="#333"/><rect x="266" y="15" width="2" height="2" fill="#333"/><rect x="266" y="18" width="2" height="2" fill="#333"/><rect x="266" y="11" width="3" height="2" fill="#333"/>
<rect x="280" y="10" width="8" height="1.5" fill="#111"/><path d="M280,13 L288,13 L284,17 Z" fill="#111"/>
<text x="375.5" y="18" font-family="Liberation Sans" font-size="12" fill="#f4f4f4" textLength="305.5" lengthAdjust="spacingAndGlyphs" style="text-shadow:0 0 1px #222">AutoCAD Architecture 2013 - Roombook_ACA_Demo.dwg</text>
<path d="M767,9.5 L771.5,14 L767,18.5 Z" fill="#111"/>
<rect x="778.5" y="5.5" width="179" height="20" fill="#f8f8f8" stroke="#6a6a6a" stroke-width="1"/>
<text x="782" y="20" font-family="Liberation Sans" font-size="10.6" fill="#8a8a8a" font-style="italic">Type a keyword or phrase</text>
<rect x="963" y="9" width="5.5" height="13" rx="1.5" fill="#eee" stroke="#222"/><rect x="971" y="9" width="5.5" height="13" rx="1.5" fill="#eee" stroke="#222"/><rect x="967" y="11" width="5" height="4" fill="#ccc" stroke="#222" stroke-width="0.8"/>
<ellipse cx="994" cy="12" rx="3.6" ry="4.6" fill="#eee" stroke="#222"/><path d="M986,22 Q988,17 994,17 Q1000,17 1002,22 Z" fill="#f4f4f4" stroke="#222" stroke-width="0.8"/>
<text x="1007.5" y="19.6" font-family="Liberation Sans" font-size="11.2" fill="#f0f0f0" textLength="35" lengthAdjust="spacingAndGlyphs">Sign In</text>
<circle cx="1094.5" cy="14.5" r="1" fill="#666"/>
<path d="M1108.5,10 L1120,20 M1120,10 L1108.5,20" stroke="#2a2a50" stroke-width="5.6"/><path d="M1108.5,10 L1120,20 M1120,10 L1108.5,20" stroke="#6870c0" stroke-width="4"/><path d="M1109,10 L1115,15.5 M1119.5,10 L1114,15" stroke="#d8dcf8" stroke-width="1.3"/>
<path d="M1138,10 L1144.5,19 L1131.5,19 Z" fill="none" stroke="#222" stroke-width="3.4" stroke-linejoin="round"/><path d="M1138,10 L1144.5,19 L1131.5,19 Z" fill="none" stroke="#f0f0f0" stroke-width="1.6" stroke-linejoin="round"/>
<circle cx="1153.5" cy="14.5" r="1" fill="#666"/>
<line x1="1166.5" y1="6" x2="1166.5" y2="24" stroke="#9a9a9a" stroke-width="1"/>
<circle cx="1184" cy="14.5" r="7.4" fill="#f8f8f8" stroke="#1a1a1a" stroke-width="1.2"/>
<text x="1184" y="19" font-family="Liberation Sans" font-size="11" fill="#1a2850" font-weight="bold" text-anchor="middle">?</text>
<circle cx="1201" cy="14.5" r="1" fill="#666"/>
<rect x="1227" y="15.5" width="11" height="2.2" fill="#222"/>
<rect x="1246.5" y="9.5" width="8" height="8" fill="none" stroke="#222" stroke-width="1.4"/><rect x="1246" y="9" width="9" height="2" fill="#222"/>
<path d="M1262.5,9.5 L1271,17.5 M1271,9.5 L1262.5,17.5" stroke="#222" stroke-width="2"/>
<text x="59.4" y="42.5" font-family="Liberation Sans" font-size="12" fill="#f0f0f0" textLength="33" lengthAdjust="spacingAndGlyphs">Home</text>
<text x="112" y="42.5" font-family="Liberation Sans" font-size="12" fill="#f0f0f0" textLength="30" lengthAdjust="spacingAndGlyphs">Insert</text>
<text x="161" y="42.5" font-family="Liberation Sans" font-size="12" fill="#f0f0f0" textLength="49" lengthAdjust="spacingAndGlyphs">Annotate</text>
<text x="230" y="42.5" font-family="Liberation Sans" font-size="12" fill="#f0f0f0" textLength="38" lengthAdjust="spacingAndGlyphs">Render</text>
<text x="287" y="42.5" font-family="Liberation Sans" font-size="12" fill="#f0f0f0" textLength="25.5" lengthAdjust="spacingAndGlyphs">View</text>
<text x="332.5" y="42.5" font-family="Liberation Sans" font-size="12" fill="#f0f0f0" textLength="42.5" lengthAdjust="spacingAndGlyphs">Manage</text>
<text x="395" y="42.5" font-family="Liberation Sans" font-size="12" fill="#f0f0f0" textLength="44.5" lengthAdjust="spacingAndGlyphs">Plug-ins</text>
<text x="459" y="42.5" font-family="Liberation Sans" font-size="12" fill="#f0f0f0" textLength="35" lengthAdjust="spacingAndGlyphs">Online</text>
<path d="M505,47.5 L505,33 Q505,31 507,31 L580,31 Q582,31 582,33 L582,47.5 Z" fill="#e8e8e8"/>
<path d="M505.5,47.5 L505.5,33 Q505.5,31.5 507,31.5 L580,31.5 Q581.5,31.5 581.5,33 L581.5,47.5" fill="none" stroke="#f8f8f8" stroke-width="1"/>
<text x="514.5" y="42.5" font-family="Liberation Sans" font-size="12" fill="#1a1a1a" textLength="58.5" lengthAdjust="spacingAndGlyphs">Roombook</text>
<rect x="605" y="34.5" width="13" height="8" rx="3" fill="#f4f4f4"/><path d="M608.5,41 L611.5,37 L614.5,41 Z" fill="#111"/><rect x="624" y="38" width="3.5" height="2" fill="#eee"/>
<path d="M66.5,56.5 L98.5,56.5 L89.5,67.5 L89.5,78 L99.5,88.5 L66.5,88.5 L76.5,78 L76.5,67.5 Z" fill="#d8d8d8" stroke="#2a2a2a" stroke-width="1"/>
<rect x="76.5" y="67.5" width="13" height="10.5" fill="#e4e4e4" stroke="#2a2a2a" stroke-width="1"/>
<rect x="84.5" y="74.5" width="13.5" height="13.5" fill="#dff2f2" stroke="#2a2a2a" stroke-width="1"/><rect x="84.5" y="74.5" width="13.5" height="2.5" fill="#555"/><path d="M87,80.5 h1.5 M90,80.5 h6 M87,84.5 h1.5 M90,84.5 h6" stroke="#2a5a5a" stroke-width="1"/>
<text x="12.4" y="103" font-family="Liberation Sans" font-size="12" fill="#3a3a3a" textLength="140" lengthAdjust="spacingAndGlyphs">Calculate Room Quantities</text>
<text x="182.8" y="68" font-family="Liberation Sans" font-size="12" fill="#3a3a3a" textLength="104.2" lengthAdjust="spacingAndGlyphs">Calculation Settings</text>
<text x="182.8" y="92.8" font-family="Liberation Sans" font-size="12" fill="#3a3a3a" textLength="89" lengthAdjust="spacingAndGlyphs">Surface Materials</text>
<text x="182.8" y="116.7" font-family="Liberation Sans" font-size="12" fill="#3a3a3a" textLength="76.2" lengthAdjust="spacingAndGlyphs">Roombook IDs</text>
<path d="M278,87 L283,87 L280.5,90 Z" fill="#444"/><path d="M265.5,111 L270.5,111 L268,114 Z" fill="#444"/>
<rect x="162.5" y="57.5" width="10" height="9" fill="#eee" stroke="#444"/><rect x="164.5" y="55.5" width="8" height="2" fill="#ccc"/><circle cx="174" cy="63" r="2.6" fill="#f4f4f4" stroke="#333"/><rect x="173" y="65" width="2" height="5" fill="#f4f4f4" stroke="#333" stroke-width="0.7"/>
<path d="M161.5,84.5 L164,81.5 L175,81.5 L175,93.5 L161.5,93.5 Z" fill="#e8e8e8" stroke="#333"/><path d="M161.5,84.5 L175,84.5" stroke="#333"/><path d="M163,83.5 L173,83.5" stroke="#777" stroke-width="2"/><circle cx="173" cy="92" r="3.4" fill="#f4f4f4" stroke="#333"/><path d="M171,90 L175,94 M175,90 L171,94" stroke="#333" stroke-width="0.8"/>
<rect x="166.5" y="105.5" width="8" height="6" fill="#f4f4f4" stroke="#333"/><rect x="161.5" y="110.5" width="8" height="8" fill="#ddd" stroke="#333"/><path d="M161.5,113.5 h8" stroke="#555"/><circle cx="173" cy="115" r="3" fill="#e8e8a8" stroke="#777" stroke-width="0.8"/>
<text x="151.5" y="140.5" font-family="Liberation Sans" font-size="12" fill="#3a3a3a" text-anchor="middle" textLength="58" lengthAdjust="spacingAndGlyphs">Roombook</text>
</svg>
<svg class="a" style="left:0;top:155px" width="1280" height="465" viewBox="0 155 1280 465">
<text x="12.9" y="172.8" font-family="Liberation Sans" font-size="11.5" fill="#111" stroke="#111" stroke-width="0.35" textLength="123.6" lengthAdjust="spacingAndGlyphs">[+][Top][2D Wireframe]</text>
<text x="645.2" y="172.8" font-family="Liberation Sans" font-size="11.5" fill="#111" stroke="#111" stroke-width="0.35" textLength="139" lengthAdjust="spacingAndGlyphs">[+][SE Isometric][Realistic]</text>
<rect x="1211.5" y="170.5" width="10" height="4" fill="#f4f4f4" stroke="#555"/>
<rect x="1231.5" y="165.5" width="9" height="9" fill="#f4f4f4" stroke="#555"/><rect x="1234.5" y="168.5" width="3" height="3" fill="none" stroke="#555"/>
<path d="M1251.5,165.5 L1261,175 M1261,165.5 L1251.5,175" stroke="#4a4a4a" stroke-width="3.8"/><path d="M1251.5,165.5 L1261,175 M1261,165.5 L1251.5,175" stroke="#f0f0f0" stroke-width="1.4"/>
<path d="M1195,221 L1217.5,209 L1240,221.5 L1218,232.5 Z" fill="#f6f6f6" stroke="#7a7a7a" stroke-width="0.9"/>
<path d="M1195,221 L1218,232.5 L1218,258 L1197,245 Z" fill="#efefef" stroke="#7a7a7a" stroke-width="0.9"/>
<path d="M1218,232.5 L1240,221.5 L1240,244 L1218,258 Z" fill="#eaeaea" stroke="#7a7a7a" stroke-width="0.9"/>
<path d="M1213,217 h6 l-1,3 h-4 z" fill="none" stroke="#aaa" stroke-width="0.8"/>
<text x="1200" y="243" font-family="Liberation Sans" font-size="6" fill="#9a9a9a" transform="rotate(25 1200 243)">SW</text>
<text x="1222" y="247" font-family="Liberation Sans" font-size="6" fill="#9a9a9a" transform="rotate(-25 1222 247)">SE</text>
<path d="M1187,231 l5,3 M1247,231 l-5,3" stroke="#d0d0d0" stroke-width="2"/>
<circle cx="1188" cy="265" r="3.5" fill="#e4e4e4"/><circle cx="1247" cy="266" r="3.5" fill="#e4e4e4"/>
<rect x="1195" y="289" width="44" height="17" rx="5" fill="#d4d4d4" opacity="0.8"/>
<text x="1199.5" y="302" font-family="Liberation Sans" font-size="11" fill="#7a7a90" textLength="32" lengthAdjust="spacingAndGlyphs">WCS</text>
<rect x="1237.5" y="331.5" width="32" height="214" rx="3" fill="#fbfbfb" stroke="#dcdcdc" stroke-width="1.2"/>
<g fill="none" stroke="#e0e0e0" stroke-width="1.2"><circle cx="1253" cy="366" r="7"/><path d="M1248,392 l3,-8 l3,8 M1247,424 l12,12 M1259,424 l-12,12 M1247,472 h12 M1253,466 v12 M1244,508 h16 v14 h-16 z"/></g>
<path d="M692,526 L692,566" stroke="#1a3a98" stroke-width="4"/>
<path d="M693,564 L727,546" stroke="#2a9a30" stroke-width="3.6"/>
<path d="M692,567 L726,588" stroke="#c03848" stroke-width="3.6"/>
<path d="M690,512 L703,512 L690,523 L703,523" fill="none" stroke="#555a70" stroke-width="1"/>
<path d="M723,530 L729.5,536 L736,530 M729.5,536 L729.5,543" fill="none" stroke="#80a088" stroke-width="1"/>
<path d="M723,571 L736,584 M736,571 L723,584" fill="none" stroke="#707070" stroke-width="1"/>
</svg>

<div class="a" id="dsb"></div>
<div class="a" id="cmd"></div>
<div class="a" id="cmdh"></div>
<div class="a" id="cmdgrip"></div>
<div class="a" id="sb"></div>
<svg class="a" style="left:0;top:620px" width="1280" height="100" viewBox="0 620 1280 100">
<defs><linearGradient id="bg" x1="0" y1="0" x2="0" y2="1"><stop offset="0" stop-color="#bdbdbd"/><stop offset="1" stop-color="#a2a2a2"/></linearGradient><linearGradient id="bb" x1="0" y1="0" x2="0" y2="1"><stop offset="0" stop-color="#d8eef4"/><stop offset="1" stop-color="#9fc6d2"/></linearGradient><linearGradient id="bd" x1="0" y1="0" x2="0" y2="1"><stop offset="0" stop-color="#9a9a9a"/><stop offset="1" stop-color="#858585"/></linearGradient><pattern id="chk" width="4" height="4" patternUnits="userSpaceOnUse"><rect width="4" height="4" fill="#a8d4f0"/><rect width="2" height="2" fill="#6aa8d8"/><rect x="2" y="2" width="2" height="2" fill="#6aa8d8"/></pattern></defs>
<rect x="0" y="620" width="5" height="100" fill="#353535"/><rect x="1275" y="620" width="5" height="100" fill="#3a3a3a"/><rect x="1" y="694" width="4" height="24" fill="#8c8c8c"/>
<rect x="897" y="622" width="61" height="22" fill="url(#bg)"/>
<path d="M897.5,622 V644 M957.5,622 V644" stroke="#d4d4d4" stroke-width="1"/>
<path d="M958.5,622 V644" stroke="#6e6e6e" stroke-width="1"/>
<path d="M910,626 L906,638 L910,635 L914,638 Z" fill="#f4f4f4" stroke="#333" stroke-width="0.8"/><path d="M903,641 L910,634 L917,641" fill="none" stroke="#f4f4f4" stroke-width="2"/>
<text x="918" y="638.5" font-family="Liberation Sans" font-size="11" fill="#1a1a1a" textLength="26" lengthAdjust="spacingAndGlyphs">1:100</text>
<path d="M946,630 L955,630 L950.5,635 Z" fill="#111"/>
<rect x="959" y="622" width="21" height="22" fill="url(#bg)"/>
<path d="M959.5,622 V644 M979.5,622 V644" stroke="#d4d4d4" stroke-width="1"/>
<path d="M980.5,622 V644" stroke="#6e6e6e" stroke-width="1"/>
<rect x="981" y="622" width="21" height="22" fill="url(#bg)"/>
<path d="M981.5,622 V644 M1001.5,622 V644" stroke="#d4d4d4" stroke-width="1"/>
<path d="M1002.5,622 V644" stroke="#6e6e6e" stroke-width="1"/>
<path d="M970,627 L965,639 L970,636 L975,639 Z" fill="#f4f4f4" stroke="#444" stroke-width="0.8"/>
<circle cx="974" cy="636" r="3" fill="#f0c040" opacity="0.8"/>
<path d="M992,627 L987,639 L992,636 L997,639 Z" fill="#f4f4f4" stroke="#444" stroke-width="0.8"/>
<circle cx="996" cy="636" r="3" fill="#f0c040" opacity="0.8"/>
<rect x="1003" y="622" width="6" height="22" fill="#6e6e6e"/>
<rect x="1009" y="622" width="72" height="22" fill="url(#bg)"/>
<path d="M1009.5,622 V644 M1080.5,622 V644" stroke="#d4d4d4" stroke-width="1"/>
<path d="M1081.5,622 V644" stroke="#6e6e6e" stroke-width="1"/>
<text x="1011.5" y="638.5" font-family="Liberation Sans" font-size="11" fill="#1a1a1a" textLength="50" lengthAdjust="spacingAndGlyphs">High Detail</text>
<path d="M1068,629.5 L1077,629.5 L1072.5,634.5 Z" fill="#111"/>
<rect x="1082" y="622" width="88" height="22" fill="url(#bd)"/>
<path d="M1082.5,622 V644 M1169.5,622 V644" stroke="#d4d4d4" stroke-width="1"/>
<path d="M1170.5,622 V644" stroke="#6e6e6e" stroke-width="1"/>
<text x="1084" y="638.5" font-family="Liberation Sans" font-size="11" fill="#1a1a1a" textLength="82" lengthAdjust="spacingAndGlyphs">Cut Plane:  1.400</text>
<rect x="1173.5" y="625.5" width="84" height="18" fill="#b8b8b8" stroke="#5a5a5a" stroke-width="1"/>
<rect x="1177.5" y="627.5" width="11" height="11" fill="#f4f4f4" stroke="#333"/><path d="M1179,636 l7,-7 M1179,632 l3,-3 M1182,637 l5,-5" stroke="#333" stroke-width="0.8"/><circle cx="1190" cy="635" r="3.2" fill="#e8e070"/>
<rect x="1199" y="627" width="14" height="11" fill="#d8ecf8" stroke="#336" stroke-width="0.7"/><path d="M1206,628 v9 M1202,634 l4,3 l4,-3" stroke="#111" stroke-width="1"/><circle cx="1211" cy="638" r="3.2" fill="#e8e070"/>
<rect x="1220" y="627" width="13" height="12" fill="#4080d0"/><path d="M1221,634 l4,4 l7,-7" stroke="#40c040" stroke-width="2" fill="none"/><rect x="1221" y="628" width="5" height="4" fill="#f0f0f0"/>
<ellipse cx="1246" cy="632" rx="5" ry="5.5" fill="#f0f0b0" stroke="#888" stroke-width="0.7"/><rect x="1244" y="637" width="4" height="4" fill="#ccc"/>
<rect x="1260" y="622" width="13" height="22" fill="url(#bg)"/>
<path d="M1260.5,622 V644 M1272.5,622 V644" stroke="#d4d4d4" stroke-width="1"/>
<path d="M1273.5,622 V644" stroke="#6e6e6e" stroke-width="1"/>
<path d="M1264,632 L1270,632 L1267,636 Z" fill="#111"/>
<rect x="5" y="648" width="21" height="45" fill="#555"/>
<path d="M8,654.5 h16 M8,657.5 h16" stroke="#8a8a8a" stroke-width="1" stroke-dasharray="1,1"/>
<path d="M11,668 L19,676 M19,668 L11,676" stroke="#f4f4f4" stroke-width="2"/>
<path d="M11,691 Q13,686 16,688 L16,691 Z" fill="#ddd"/>
<text x="29.5" y="665" font-family="Liberation Mono" font-size="12.8" fill="#111" stroke="#111" stroke-width="0.2" textLength="54.5" lengthAdjust="spacingAndGlyphs">Command:</text>
<rect x="33.5" y="675.5" width="13" height="13" fill="#f4f4f4" stroke="#8a8a8a"/><path d="M36,678 l3.5,3 l-3.5,3 M40,686 h4" stroke="#222" stroke-width="1.2" fill="none"/>
<path d="M50,681 L55,681 L52.5,684 Z" fill="#888"/>
<text x="63.5" y="685.7" font-family="Liberation Mono" font-size="11.8" fill="#a8a8a8" font-style="italic" textLength="97.5" lengthAdjust="spacingAndGlyphs">Type a command</text>
<text x="16.8" y="710.5" font-family="Liberation Sans" font-size="12" fill="#1e1e1e" textLength="98" lengthAdjust="spacingAndGlyphs">3.795, -2.464, 0.000</text>
<rect x="158.3" y="695" width="21.5" height="23" fill="url(#bg)"/>
<path d="M158.8,695 V718 M179.3,695 V718" stroke="#d4d4d4" stroke-width="1"/>
<path d="M180.3,695 V718" stroke="#6e6e6e" stroke-width="1"/>
<rect x="180.3" y="695" width="21.5" height="23" fill="url(#bg)"/>
<path d="M180.8,695 V718 M201.3,695 V718" stroke="#d4d4d4" stroke-width="1"/>
<path d="M202.3,695 V718" stroke="#6e6e6e" stroke-width="1"/>
<rect x="202.3" y="695" width="21.5" height="23" fill="url(#bg)"/>
<path d="M202.8,695 V718 M223.3,695 V718" stroke="#d4d4d4" stroke-width="1"/>
<path d="M224.3,695 V718" stroke="#6e6e6e" stroke-width="1"/>
<rect x="224.3" y="695" width="21.5" height="23" fill="url(#bg)"/>
<path d="M224.8,695 V718 M245.3,695 V718" stroke="#d4d4d4" stroke-width="1"/>
<path d="M246.3,695 V718" stroke="#6e6e6e" stroke-width="1"/>
<rect x="246.3" y="695" width="21.5" height="23" fill="url(#bb)"/>
<path d="M246.8,695 V718 M267.3,695 V718" stroke="#d4d4d4" stroke-width="1"/>
<path d="M268.3,695 V718" stroke="#6e6e6e" stroke-width="1"/>
<rect x="268.3" y="695" width="21.5" height="23" fill="url(#bb)"/>
<path d="M268.8,695 V718 M289.3,695 V718" stroke="#d4d4d4" stroke-width="1"/>
<path d="M290.3,695 V718" stroke="#6e6e6e" stroke-width="1"/>
<rect x="290.3" y="695" width="21.5" height="23" fill="url(#bg)"/>
<path d="M290.8,695 V718 M311.3,695 V718" stroke="#d4d4d4" stroke-width="1"/>
<path d="M312.3,695 V718" stroke="#6e6e6e" stroke-width="1"/>
<rect x="312.3" y="695" width="21.5" height="23" fill="url(#bb)"/>
<path d="M312.8,695 V718 M333.3,695 V718" stroke="#d4d4d4" stroke-width="1"/>
<path d="M334.3,695 V718" stroke="#6e6e6e" stroke-width="1"/>
<rect x="334.3" y="695" width="21.5" height="23" fill="url(#bb)"/>
<path d="M334.8,695 V718 M355.3,695 V718" stroke="#d4d4d4" stroke-width="1"/>
<path d="M356.3,695 V718" stroke="#6e6e6e" stroke-width="1"/>
<rect x="356.3" y="695" width="21.5" height="23" fill="url(#bb)"/>
<path d="M356.8,695 V718 M377.3,695 V718" stroke="#d4d4d4" stroke-width="1"/>
<path d="M378.3,695 V718" stroke="#6e6e6e" stroke-width="1"/>
<rect x="378.3" y="695" width="21.5" height="23" fill="url(#bg)"/>
<path d="M378.8,695 V718 M399.3,695 V718" stroke="#d4d4d4" stroke-width="1"/>
<path d="M400.3,695 V718" stroke="#6e6e6e" stroke-width="1"/>
<rect x="400.3" y="695" width="21.5" height="23" fill="url(#bb)"/>
<path d="M400.8,695 V718 M421.3,695 V718" stroke="#d4d4d4" stroke-width="1"/>
<path d="M422.3,695 V718" stroke="#6e6e6e" stroke-width="1"/>
<rect x="422.3" y="695" width="21.5" height="23" fill="url(#bg)"/>
<path d="M422.8,695 V718 M443.3,695 V718" stroke="#d4d4d4" stroke-width="1"/>
<path d="M444.3,695 V718" stroke="#6e6e6e" stroke-width="1"/>
<rect x="444.3" y="695" width="21.5" height="23" fill="url(#bg)"/>
<path d="M444.8,695 V718 M465.3,695 V718" stroke="#d4d4d4" stroke-width="1"/>
<path d="M466.3,695 V718" stroke="#6e6e6e" stroke-width="1"/>
<rect x="466.3" y="695" width="21.5" height="23" fill="url(#bg)"/>
<path d="M466.8,695 V718 M487.3,695 V718" stroke="#d4d4d4" stroke-width="1"/>
<path d="M488.3,695 V718" stroke="#6e6e6e" stroke-width="1"/>
<path d="M167.3,700 v14 M160.3,707 h14" stroke="#111" stroke-width="1.2"/><path d="M167.3,704 v6" stroke="#111" stroke-width="3"/><rect x="172.3" y="709" width="4" height="4" fill="#fff" stroke="#111" stroke-width="0.8"/>
<path d="M185.3,701 v1 M185.3,704 v1 M185.3,707 v1 M185.3,710 v1 M189.3,701 v1 M189.3,704 v1 M189.3,707 v1 M189.3,710 v1" stroke="#222" stroke-width="1"/><path d="M196.3,700 v12 h-8" stroke="#111" stroke-width="1.3" fill="none"/>
<rect x="206.8" y="699" width="13" height="13" fill="#fff" stroke="#111" stroke-width="1.2"/><path d="M209.8,699 v13 M212.8,699 v13 M215.8,699 v13 M206.8,702.5 h13 M206.8,705.5 h13 M206.8,708.5 h13" stroke="#111" stroke-width="1.1"/>
<path d="M228.3,699 v13 h13 M228.3,705 h6 v7" stroke="#444" stroke-width="1" fill="none"/>
<path d="M252.3,712 l11,-10 M252.3,712 h11" stroke="#111" stroke-width="1.2"/><path d="M254.3,703 a5,5 0 1 0 6,9" stroke="#333" stroke-width="1.1" fill="none" stroke-dasharray="2,1"/>
<rect x="274.3" y="701" width="12" height="12" fill="#fff" stroke="#222" stroke-width="1"/><circle cx="273.3" cy="700.5" r="1.8" fill="#fff" stroke="#222" stroke-width="0.8"/>
<path d="M295.3,702 l3,-3 h8 v10 l-3,3 h-8 z" fill="#eee" stroke="#333" stroke-width="1"/><circle cx="295.3" cy="713" r="1.8" fill="#f0c080"/>
<path d="M318.3,712 l10,-9 M318.3,712 h11" stroke="#111" stroke-width="1.2"/>
<path d="M338.3,699 v13 h13 M338.3,712 l10,-9" stroke="#224" stroke-width="1" fill="none"/><circle cx="350.3" cy="702" r="2.5" fill="#f0a040"/>
<path d="M360.3,706 h12 M363.3,701 v10" stroke="#111" stroke-width="1.3"/><rect x="367.3" y="706.5" width="7" height="4" fill="#fff" stroke="#111" stroke-width="1"/>
<path d="M382.3,706 h14 M389.3,699 v14" stroke="#111" stroke-width="1.3"/><path d="M383.3,706 h6" stroke="#111" stroke-width="3"/>
<rect x="404.3" y="699" width="14" height="14" fill="url(#chk)" stroke="#1a3a80" stroke-width="1.2"/>
<rect x="428.8" y="700.5" width="9" height="11" fill="#fff" stroke="#111" stroke-width="1.4"/><path d="M430.8,703.5 h5 M430.8,706.5 h5 M430.8,709 h5" stroke="#111" stroke-width="1"/>
<path d="M447.3,702 h6 M450.3,699 v6" stroke="#111" stroke-width="1.2"/><rect x="452.3" y="704" width="8" height="8" fill="#b0d8a0" stroke="#333" stroke-width="0.8"/><rect x="454.3" y="706" width="8" height="8" fill="#7cc060" stroke="#333" stroke-width="0.8"/>
<path d="M474.3,699 h6 v5 h5 v6 h-5 v5 h-6 v-5 h-5 v-6 h5 z" fill="#fff" stroke="#555" stroke-width="1"/>
<rect x="488.5" y="695.5" width="395" height="22" fill="url(#bd)" stroke="#707070" stroke-width="0.8" opacity="0.6"/>
<rect x="884" y="695" width="43" height="23" fill="url(#bg)"/>
<path d="M884.5,695 V718 M926.5,695 V718" stroke="#d4d4d4" stroke-width="1"/>
<path d="M927.5,695 V718" stroke="#6e6e6e" stroke-width="1"/>
<text x="886" y="711" font-family="Liberation Sans" font-size="10.8" fill="#1a1a1a" textLength="38" lengthAdjust="spacingAndGlyphs">MODEL</text>
<rect x="928" y="695" width="21" height="23" fill="url(#bb)"/>
<path d="M928.5,695 V718 M948.5,695 V718" stroke="#d4d4d4" stroke-width="1"/>
<path d="M949.5,695 V718" stroke="#6e6e6e" stroke-width="1"/>
<rect x="931.5" y="699.5" width="14" height="13" fill="#1a1a1a"/><path d="M935,711 v-7 h8 M938,711 v-4 h5" stroke="#eee" stroke-width="1" fill="none"/>
<rect x="950" y="695" width="21" height="23" fill="url(#bg)"/>
<path d="M950.5,695 V718 M970.5,695 V718" stroke="#d4d4d4" stroke-width="1"/>
<path d="M971.5,695 V718" stroke="#6e6e6e" stroke-width="1"/>
<rect x="972" y="695" width="21" height="23" fill="url(#bg)"/>
<path d="M972.5,695 V718 M992.5,695 V718" stroke="#d4d4d4" stroke-width="1"/>
<path d="M993.5,695 V718" stroke="#6e6e6e" stroke-width="1"/>
<rect x="994" y="695" width="21" height="23" fill="url(#bg)"/>
<path d="M994.5,695 V718 M1014.5,695 V718" stroke="#d4d4d4" stroke-width="1"/>
<path d="M1015.5,695 V718" stroke="#6e6e6e" stroke-width="1"/>
<rect x="954.5" y="700.5" width="12" height="12" fill="#f0f0f0" stroke="#111" stroke-width="1.1"/><path d="M956,702 l9,9 M956,711 h4 M961,702 v9 M961,706 h5" stroke="#111" stroke-width="0.8"/>
<rect x="975.5" y="699.5" width="13" height="12" fill="#f0f0f0" stroke="#111" stroke-width="1"/><path d="M978,709 v-7 l6,7 z" fill="none" stroke="#111"/><path d="M975,714.5 h15" stroke="#111" stroke-width="1.3"/>
<rect x="997.5" y="699.5" width="7" height="7" fill="#eee" stroke="#222"/><rect x="1005.5" y="699.5" width="7" height="7" fill="#eee" stroke="#222"/><path d="M997,711.5 h16" stroke="#222" stroke-width="2"/>
<rect x="1016" y="695" width="17" height="23" fill="#8a8a8a"/>
<rect x="1034" y="695" width="21" height="23" fill="url(#bg)"/>
<path d="M1034.5,695 V718 M1054.5,695 V718" stroke="#d4d4d4" stroke-width="1"/>
<path d="M1055.5,695 V718" stroke="#6e6e6e" stroke-width="1"/>
<rect x="1056" y="695" width="21" height="23" fill="url(#bg)"/>
<path d="M1056.5,695 V718 M1076.5,695 V718" stroke="#d4d4d4" stroke-width="1"/>
<path d="M1077.5,695 V718" stroke="#6e6e6e" stroke-width="1"/>
<rect x="1078" y="695" width="20" height="23" fill="url(#bg)"/>
<path d="M1078.5,695 V718 M1097.5,695 V718" stroke="#d4d4d4" stroke-width="1"/>
<path d="M1098.5,695 V718" stroke="#6e6e6e" stroke-width="1"/>
<circle cx="1044" cy="706" r="6" fill="none" stroke="#222" stroke-width="2.6" stroke-dasharray="2.4,1.5"/><circle cx="1044" cy="706" r="2.5" fill="none" stroke="#222" stroke-width="1.2"/><path d="M1047,713 l4,-4 v4 z" fill="#111"/>
<rect x="1059.5" y="705.5" width="9" height="8" fill="#f4f4f4" stroke="#222"/><path d="M1066,705 v-3 a3.5,3.5 0 0 1 7,0 v2" fill="none" stroke="#222" stroke-width="1.3"/>
<rect x="1081.5" y="700.5" width="12" height="8" fill="#eee" stroke="#444"/><path d="M1081,702.5 h12" stroke="#444"/><circle cx="1092" cy="711" r="3" fill="#f4f4f4" stroke="#555" stroke-width="0.8"/>
<rect x="1099" y="695" width="93" height="23" fill="url(#bd)"/>
<path d="M1099.5,695 V718 M1191.5,695 V718" stroke="#d4d4d4" stroke-width="1"/>
<path d="M1192.5,695 V718" stroke="#6e6e6e" stroke-width="1"/>
<text x="1102.7" y="711" font-family="Liberation Sans" font-size="11" fill="#1a1a1a" textLength="85" lengthAdjust="spacingAndGlyphs">Elevation:  +0.000</text>
<rect x="1193" y="695" width="20" height="23" fill="url(#bg)"/>
<path d="M1193.5,695 V718 M1212.5,695 V718" stroke="#d4d4d4" stroke-width="1"/>
<path d="M1213.5,695 V718" stroke="#6e6e6e" stroke-width="1"/>
<path d="M1196,699 h5 l-5,5 h5" fill="none" stroke="#111" stroke-width="1.2"/><path d="M1196,707 l7,-2 l6,2 l-6,3 z M1196,711 l7,-2 l6,2 l-6,3 z" fill="#eee" stroke="#333" stroke-width="0.8"/><circle cx="1208" cy="712" r="2.5" fill="#a0e0e0"/>
<rect x="1214" y="695" width="13" height="23" fill="#828282"/>
<rect x="1227" y="695" width="10" height="23" fill="url(#bg)"/>
<path d="M1227.5,695 V718 M1236.5,695 V718" stroke="#d4d4d4" stroke-width="1"/>
<path d="M1237.5,695 V718" stroke="#6e6e6e" stroke-width="1"/>
<path d="M1229.5,705 L1235,705 L1232.2,709 Z" fill="#111"/>
<rect x="1238" y="695" width="20" height="23" fill="url(#bg)"/>
<path d="M1238.5,695 V718 M1257.5,695 V718" stroke="#d4d4d4" stroke-width="1"/>
<path d="M1258.5,695 V718" stroke="#6e6e6e" stroke-width="1"/>
<rect x="1241.5" y="699.5" width="14" height="13" fill="#f4f4f4" stroke="#222" stroke-width="1"/><rect x="1241.5" y="699.5" width="14" height="2.5" fill="#aaa"/>
<rect x="1270" y="704" width="2" height="2" fill="#e8e8e8"/>
<rect x="1266" y="708" width="2" height="2" fill="#e8e8e8"/>
<rect x="1270" y="708" width="2" height="2" fill="#e8e8e8"/>
<rect x="1262" y="712" width="2" height="2" fill="#e8e8e8"/>
<rect x="1266" y="712" width="2" height="2" fill="#e8e8e8"/>
<rect x="1270" y="712" width="2" height="2" fill="#e8e8e8"/>
</svg>

</body></html>
